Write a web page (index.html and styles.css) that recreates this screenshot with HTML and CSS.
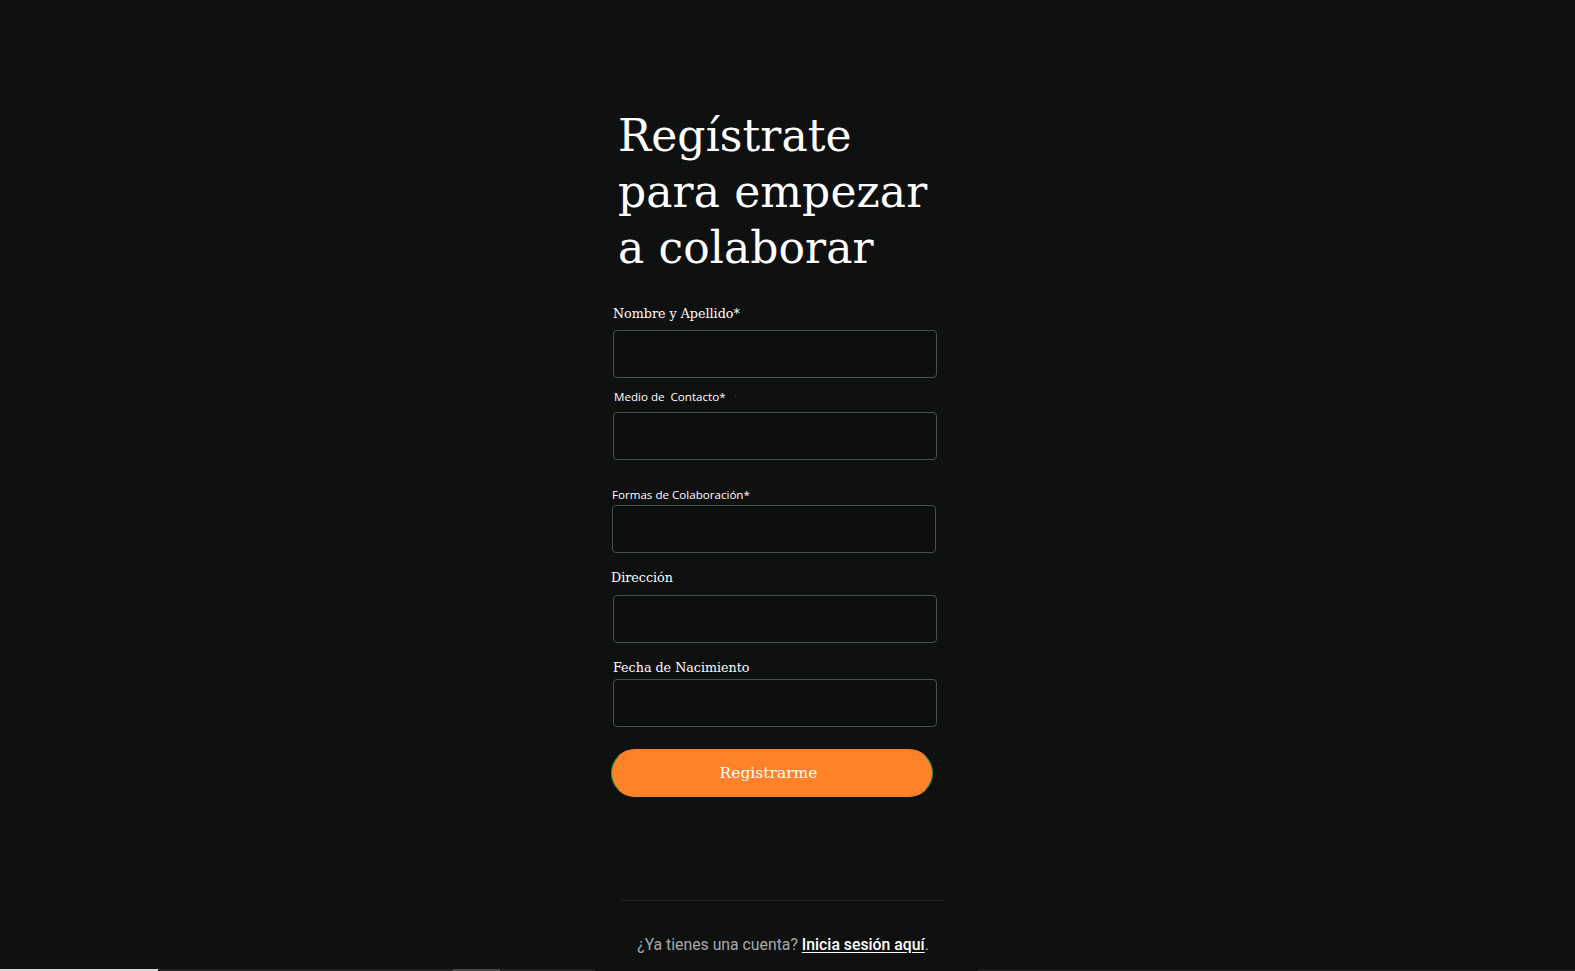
FILE: index.html
```html
<!DOCTYPE html>
<html lang="es">
<head>
<meta charset="utf-8">
<title>Regístrate</title>
<link rel="stylesheet" href="styles.css">
</head>
<body>
<div class="page">
  <main class="column">
    <h1 class="title">Regístrate<br>para empezar<br>a colaborar</h1>
    <form class="form">
      <label class="label serif f1">Nombre y Apellido*</label>
      <input class="field" type="text">

      <label class="label sans f2">Medio de&nbsp; Contacto*<span class="speck"></span></label>
      <input class="field" type="text">

      <label class="label sans f3">Formas de Colaboración*</label>
      <input class="field shift-left" type="text">

      <label class="label serif f4">Dirección</label>
      <input class="field" type="text">

      <label class="label serif f5">Fecha de Nacimiento</label>
      <input class="field" type="text">

      <button class="submit" type="button">Registrarme</button>
    </form>
    <div class="footer">
      <hr class="divider">
      <p class="login">¿Ya tienes una cuenta? <a href="#" class="login-link">Inicia sesión aquí</a>.</p>
    </div>
  </main>
  <div class="strip">
    <span class="seg seg-a"></span>
    <span class="seg seg-b"></span>
    <span class="seg seg-c"></span>
    <span class="seg seg-b2"></span>
    <span class="seg seg-gap"></span>
    <span class="seg seg-d"></span>
  </div>
</div>
</body>
</html>
```

FILE: styles.css
```css
* { box-sizing: border-box; }
html, body {
  margin: 0;
  padding: 0;
  background: #0f1111;
  color: #ffffff;
}
.page {
  min-height: 100vh;
  display: flex;
  flex-direction: column;
}
.column {
  width: 324px;
  margin-left: calc(50% - 174.5px);
  padding-top: 108px;
}
.title {
  margin: 0 0 0 5px;
  font-family: "DejaVu Serif", "Liberation Serif", serif;
  font-weight: normal;
  font-size: 44px;
  line-height: 56px;
  letter-spacing: 0.1px;
  color: #ffffff;
}
.form {
  display: flex;
  flex-direction: column;
}
.label {
  display: block;
  color: #ffffff;
  white-space: nowrap;
}
.serif {
  font-family: "DejaVu Serif", "Liberation Serif", serif;
  font-size: 12.7px;
  line-height: 16px;
}
.sans {
  font-family: "Open Sans", "Noto Sans", sans-serif;
  font-size: 11.6px;
  line-height: 15px;
}
.f1 { margin-top: 30px; margin-bottom: 8px; }
.f2 { margin-top: 11px; margin-bottom: 8px; margin-left: 1px; position: relative; }
.f3 { margin-top: 27px; margin-bottom: 3px; margin-left: -1px; }
.f4 { margin-top: 17px; margin-bottom: 9px; margin-left: -2px; }
.f5 { margin-top: 17px; margin-bottom: 3px; }
.speck {
  position: absolute;
  left: 121px;
  top: 6px;
  width: 1px;
  height: 1px;
  background: #5a4a30;
}
.field {
  display: block;
  width: 324px;
  height: 48px;
  margin: 0;
  border: 1px solid #4a4e51;
  border-radius: 4px;
  background: #0d0f0f;
  color: #fff;
  font: 14px "Open Sans", sans-serif;
  padding: 0 10px;
}
.shift-left { margin-left: -1px; }
.submit {
  display: block;
  margin: 22px 0 0 -2px;
  width: 322px;
  height: 48px;
  background: #ff8128;
  border: 1px solid #ff8128;
  border-left-color: #1f9a48;
  border-right-color: #1f9a48;
  border-radius: 24px;
  color: #ffffff;
  font-family: "DejaVu Serif", "Liberation Serif", serif;
  font-size: 15.5px;
  padding: 0 7px 0 0;
  cursor: pointer;
}
.footer {
  margin-left: 8px;
  width: 324px;
  margin-top: 103px;
}
.divider {
  margin: 0;
  border: 0;
  height: 1px;
  background: #242626;
}
.login {
  margin: 34px 0 0 0;
  text-align: center;
  font-family: Roboto, "Noto Sans", sans-serif;
  font-size: 15.8px;
  line-height: 20px;
  color: #a8a8a8;
}
.login-link {
  color: #ffffff;
  font-weight: 500;
  text-decoration: underline;
  text-underline-offset: 2px;
}
.strip {
  margin-top: auto;
  height: 2px;
  display: flex;
}
.seg { display: block; height: 2px; }
.seg-a { width: 158px; background: #d8d8d8; }
.seg-b { width: 295px; background: #222424; }
.seg-c { width: 47px; background: #474747; }
.seg-b2 { width: 95px; background: #222424; }
.seg-gap { width: 383px; }
.seg-d { flex: 1; background: #1c1e1e; }
```
